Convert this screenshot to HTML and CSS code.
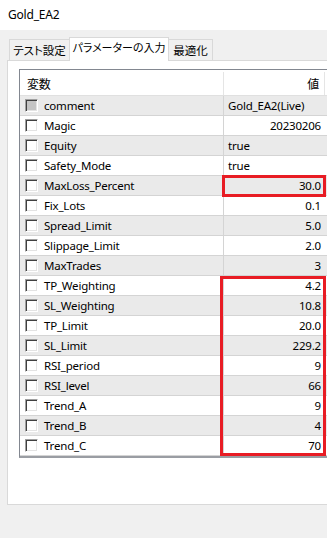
FILE: index.html
```html
<!DOCTYPE html>
<html lang="ja">
<head>
<meta charset="utf-8">
<title>Gold_EA2</title>
<link rel="stylesheet" href="styles.css">
</head>
<body>
<div class="titlebar">Gold_EA2</div>
<div class="tabs">
  <div class="tab tab-1">テスト設定</div>
  <div class="tab tab-2 active">パラメーターの入力</div>
  <div class="tab tab-3">最適化</div>
</div>
<div class="panel">
  <div class="list">
    <div class="row hdr"><div class="c-name">変数</div><div class="c-val">値</div><div class="c-rest"></div></div>
    <div class="row alt"><div class="c-name"><span class="cb cb-dis"></span>comment</div><div class="c-val left">Gold_EA2(Live)</div><div class="c-rest"></div></div>
    <div class="row"><div class="c-name"><span class="cb"></span>Magic</div><div class="c-val">20230206</div><div class="c-rest"></div></div>
    <div class="row alt"><div class="c-name"><span class="cb"></span>Equity</div><div class="c-val left">true</div><div class="c-rest"></div></div>
    <div class="row"><div class="c-name"><span class="cb"></span>Safety_Mode</div><div class="c-val left">true</div><div class="c-rest"></div></div>
    <div class="row alt"><div class="c-name"><span class="cb"></span>MaxLoss_Percent</div><div class="c-val">30.0</div><div class="c-rest"></div></div>
    <div class="row"><div class="c-name"><span class="cb"></span>Fix_Lots</div><div class="c-val">0.1</div><div class="c-rest"></div></div>
    <div class="row alt"><div class="c-name"><span class="cb"></span>Spread_Limit</div><div class="c-val">5.0</div><div class="c-rest"></div></div>
    <div class="row"><div class="c-name"><span class="cb"></span>Slippage_Limit</div><div class="c-val">2.0</div><div class="c-rest"></div></div>
    <div class="row alt"><div class="c-name"><span class="cb"></span>MaxTrades</div><div class="c-val">3</div><div class="c-rest"></div></div>
    <div class="row"><div class="c-name"><span class="cb"></span>TP_Weighting</div><div class="c-val">4.2</div><div class="c-rest"></div></div>
    <div class="row alt"><div class="c-name"><span class="cb"></span>SL_Weighting</div><div class="c-val">10.8</div><div class="c-rest"></div></div>
    <div class="row"><div class="c-name"><span class="cb"></span>TP_Limit</div><div class="c-val">20.0</div><div class="c-rest"></div></div>
    <div class="row alt"><div class="c-name"><span class="cb"></span>SL_Limit</div><div class="c-val">229.2</div><div class="c-rest"></div></div>
    <div class="row"><div class="c-name"><span class="cb"></span>RSI_period</div><div class="c-val">9</div><div class="c-rest"></div></div>
    <div class="row alt"><div class="c-name"><span class="cb"></span>RSI_level</div><div class="c-val">66</div><div class="c-rest"></div></div>
    <div class="row"><div class="c-name"><span class="cb"></span>Trend_A</div><div class="c-val">9</div><div class="c-rest"></div></div>
    <div class="row alt"><div class="c-name"><span class="cb"></span>Trend_B</div><div class="c-val">4</div><div class="c-rest"></div></div>
    <div class="row"><div class="c-name"><span class="cb"></span>Trend_C</div><div class="c-val">70</div><div class="c-rest"></div></div>
    <div class="mark mark-1"></div>
    <div class="mark mark-2"></div>
  </div>
</div>
</body>
</html>
```
FILE: styles.css
```css
* { box-sizing: border-box; }
html, body {
  margin: 0;
  padding: 0;
}
body {
  width: 327px;
  height: 538px;
  overflow: hidden;
  background: #f0f0f0;
  font-family: "Noto Sans", "Noto Sans CJK JP", sans-serif;
  font-size: 11.5px;
  letter-spacing: -0.2px;
  color: #000;
}
.titlebar {
  height: 30px;
  background: #fff;
  padding-left: 8px;
  line-height: 30px;
  font-size: 12px;
}
.tabs {
  display: flex;
  align-items: flex-end;
  height: 31px;
  padding-left: 9px;
  position: relative;
  z-index: 2;
}
.tab {
  font-family: "Noto Sans CJK JP", sans-serif;
  font-feature-settings: "palt";
  font-size: 11.5px;
  letter-spacing: 0;
  white-space: nowrap;
  height: 21px;
  border: 1px solid #d9d9d9;
  border-bottom: none;
  background: #f0f0f0;
  text-align: center;
  line-height: 20px;
  margin-bottom: 1px;
}
.tab-1 { width: 60px; border-right: none; }
.tab-2 { width: 100px; }
.tab-3 { width: 44px; border-left: none; }
.tab.active {
  background: #fff;
  height: 24px;
  margin-bottom: 0;
  line-height: 19px;
  font-size: 11px;
}
.panel {
  margin-left: 7px;
  margin-top: -1px;
  height: 445px;
  background: #fff;
  border: 1px solid #d9d9d9;
  border-right: none;
  padding: 8px 0 0 11px;
  overflow: hidden;
}
.list {
  position: relative;
  border: 1px solid #828790;
  border-right: none;
  border-bottom: 2px solid #9a9da3;
}
.row {
  display: grid;
  grid-template-columns: 204px 101px 1fr;
  height: 20px;
  border-bottom: 1px solid #d4d4d4;
  line-height: 19px;
}
.row.alt { background: #eaeaea; }
.row .c-name {
  display: flex;
  align-items: center;
  padding-left: 5px;
  border-right: 1px solid #d4d4d4;
  white-space: nowrap;
}
.row .c-val {
  text-align: right;
  padding-right: 4px;
  white-space: nowrap;
}
.row .c-val.left {
  text-align: left;
  padding-left: 4px;
}
.row.hdr {
  height: 26px;
  line-height: 23px;
  background: #fff;
  border-bottom: 1px solid #e0e0e0;
}
.row.hdr .c-name,
.row.hdr .c-val {
  font-family: "Noto Sans CJK JP", sans-serif;
  font-size: 12px;
  margin-top: 2px;
  border-right: 1px solid #e5e5e5;
}
.row.hdr .c-name { padding-left: 7px; }
.row.hdr .c-val { padding-right: 5px; }
.cb {
  display: inline-block;
  width: 13px;
  height: 13px;
  margin-right: 6px;
  background: #fff;
  border-top: 1px solid #a0a0a0;
  border-left: 1px solid #a0a0a0;
  border-right: 1px solid #fff;
  border-bottom: 1px solid #fff;
  box-shadow: inset 1px 1px 0 #404040, inset -1px -1px 0 #e3e3e3;
  flex: none;
}
.cb.cb-dis { background: #c4c4c4; }
.mark {
  position: absolute;
  border: 3px solid #e81c24;
  pointer-events: none;
}
.mark-1 { left: 202px; top: 105px; width: 104px; height: 22px; }
.mark-2 { left: 200px; top: 206px; width: 106px; height: 180px; }
```
